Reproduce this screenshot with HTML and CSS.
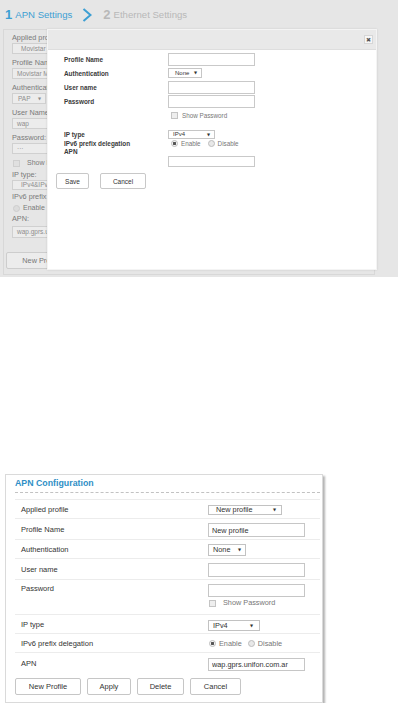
FILE: index.html
```html
<!DOCTYPE html>
<html lang="en">
<head>
  <meta charset="UTF-8" />
  <meta name="viewport" content="width=device-width, initial-scale=1.0"/>
  <title>APN Settings</title>
  <link rel="stylesheet" href="styles.css">
</head>
<body>

  <!-- wizard step with the "new profile" dialog open -->
  <div class="wizard-shot">
    <div class="steps">
      <span class="step-num">1</span><span class="step-name">APN Settings</span>
      <svg class="step-arrow" width="10" height="14" viewBox="0 0 10 14">
        <polyline points="1.5,1 8.5,7 1.5,13" />
      </svg>
      <span class="step-num off">2</span><span class="step-name off">Ethernet Settings</span>
    </div>

    <div class="old-panel">
      <div class="old-label first">Applied profile:</div>
      <div class="old-box select">Movistar Nacional</div>
      <div class="old-label">Profile Name:</div>
      <div class="old-box">Movistar MMS</div>
      <div class="old-label">Authentication:</div>
      <div class="old-box select small">PAP <span class="arrow">&#9660;</span></div>
      <div class="old-label">User Name:</div>
      <div class="old-box">wap</div>
      <div class="old-label">Password:</div>
      <div class="old-box">&middot;&middot;&middot;</div>
      <div class="old-check"><span class="check dim"></span>Show Password</div>
      <div class="old-label near">IP type:</div>
      <div class="old-box select thin">IPv4&amp;IPv6</div>
      <div class="old-label near">IPv6 prefix delegation:</div>
      <div class="old-radio"><span class="radio dim"></span>Enable</div>
      <div class="old-label nearer">APN:</div>
      <div class="old-box tall">wap.gprs.unifon.com.ar</div>
      <button class="old-btn">New Profile</button>
    </div>

    <div class="modal">
      <div class="modal-head"><span class="modal-close">&#10006;</span></div>
      <form class="modal-body">
        <div class="mrow">
          <label>Profile Name</label>
          <input type="text" class="m-input">
        </div>
        <div class="mrow">
          <label>Authentication</label>
          <div class="m-select auth">None <span class="arrow">&#9660;</span></div>
        </div>
        <div class="mrow">
          <label>User name</label>
          <input type="text" class="m-input">
        </div>
        <div class="mrow">
          <label>Password</label>
          <input type="password" class="m-input">
        </div>
        <div class="mrow">
          <span></span>
          <div class="m-check"><span class="check"></span>Show Password</div>
        </div>
        <div class="mrow iptype">
          <label>IP type</label>
          <div class="m-select ip">IPv4 <span class="arrow">&#9660;</span></div>
        </div>
        <div class="mrow prefix">
          <label>IPv6 prefix delegation</label>
          <div class="m-radios">
            <span class="radio on"></span>Enable
            <span class="radio"></span>Disable
          </div>
        </div>
        <div class="mrow apn">
          <label>APN</label>
          <input type="text" class="m-input">
        </div>
        <div class="m-buttons">
          <button type="button" class="m-btn save">Save</button>
          <button type="button" class="m-btn cancel">Cancel</button>
        </div>
      </form>
    </div>
  </div>

  <div class="spacer"></div>

  <!-- APN configuration card -->
  <div class="apn-card">
    <h3>APN Configuration</h3>

    <div class="apn-rows">
      <div class="apn-row">
        <label>Applied profile</label>
        <div class="c-select applied">New profile <span class="arrow">&#9660;</span></div>
      </div>
      <div class="apn-row tall">
        <label>Profile Name</label>
        <input type="text" class="c-input" value="New profile">
      </div>
      <div class="apn-row">
        <label>Authentication</label>
        <div class="c-select auth">None <span class="arrow">&#9660;</span></div>
      </div>
      <div class="apn-row tall">
        <label>User name</label>
        <input type="text" class="c-input">
      </div>
      <div class="apn-row password">
        <label>Password</label>
        <div class="c-stack">
          <input type="password" class="c-input">
          <div class="c-check"><span class="check"></span>Show Password</div>
        </div>
      </div>
      <div class="apn-row">
        <label>IP type</label>
        <div class="c-select ip">IPv4 <span class="arrow">&#9660;</span></div>
      </div>
      <div class="apn-row">
        <label>IPv6 prefix delegation</label>
        <div class="c-radios">
          <span class="radio on"></span>Enable
          <span class="radio"></span>Disable
        </div>
      </div>
      <div class="apn-row last">
        <label>APN</label>
        <input type="text" class="c-input" value="wap.gprs.unifon.com.ar">
      </div>
    </div>

    <div class="apn-buttons">
      <button class="c-btn new">New Profile</button>
      <button class="c-btn apply">Apply</button>
      <button class="c-btn delete">Delete</button>
      <button class="c-btn cancel">Cancel</button>
    </div>
  </div>

</body>
</html>
```

FILE: styles.css
```css
body {
  margin: 0;
  padding: 0;
  font-family: 'Liberation Sans', Arial, sans-serif;
  background: #fff;
  color: #333;
}

button,
input {
  font-family: inherit;
  margin: 0;
}

.arrow {
  font-family: 'DejaVu Sans', sans-serif;
  font-size: 4px;
}

/* ---------- top screenshot ---------- */

.wizard-shot {
  position: relative;
  height: 277px;
  background: #e6e6e6;
  overflow: hidden;
}

.steps {
  display: flex;
  align-items: center;
  height: 29px;
  padding-left: 5px;
  box-sizing: border-box;
}

.step-num {
  font-size: 13px;
  font-weight: bold;
  color: #3d9fd3;
  margin-right: 3px;
}

.step-name {
  font-size: 9.6px;
  color: #3d9fd3;
}

.steps .off {
  color: #b8b8b8;
}

.step-arrow {
  margin: 0 11px 0 10px;
}

.step-arrow polyline {
  fill: none;
  stroke: #3d9fd3;
  stroke-width: 2;
}

.old-panel {
  margin-left: 3px;
  width: 372px;
  height: 246px;
  box-sizing: border-box;
  border: 1px solid #d8d8d8;
  padding: 3px 0 0 8px;
  display: flex;
  flex-direction: column;
  align-items: flex-start;
  color: #7a7a7a;
}

.old-label {
  font-size: 7.3px;
  line-height: 10px;
  margin-top: 4px;
}

.old-label.first {
  margin-top: 0;
}

.old-label.near {
  margin-top: 2px;
}

.old-label.nearer {
  margin-top: 1px;
}

.old-box {
  width: 80px;
  height: 11px;
  box-sizing: border-box;
  border: 1px solid #d0d0d0;
  background: #ececec;
  font-size: 6.5px;
  line-height: 9px;
  color: #8c8c8c;
  padding-left: 4px;
}

.old-box.select {
  padding-left: 8px;
}

.old-box.small {
  width: 34px;
  padding-left: 5px;
  display: flex;
  justify-content: space-between;
  padding-right: 4px;
}

.old-box.thin {
  height: 10px;
  line-height: 8px;
}

.old-box.tall {
  height: 12px;
  line-height: 10px;
  margin-top: 2px;
}

.old-check,
.old-radio {
  display: flex;
  align-items: center;
  font-size: 7px;
  line-height: 10px;
  margin-top: 4px;
  margin-left: 1px;
}

.old-radio {
  margin-top: 1px;
}

.old-check .check {
  margin-right: 7px;
}

.old-btn {
  margin: 14px 0 0 -6px;
  width: 70px;
  height: 17px;
  border: 1px solid #cdcdcd;
  border-radius: 2px;
  background: #ececec;
  font-size: 7.3px;
  color: #777;
}

.check {
  display: inline-block;
  width: 5px;
  height: 5px;
  border: 1px solid #c4c4c4;
  background: #eee;
  margin-right: 4px;
}

.check.dim {
  background: #e0e0e0;
  border-color: #cfcfcf;
}

.radio {
  display: inline-block;
  width: 5px;
  height: 5px;
  border: 1px solid #bdbdbd;
  border-radius: 50%;
  background: #e8e8e8;
  margin-right: 3px;
}

.radio.on {
  background: radial-gradient(circle, #555 0 1.4px, #f4f4f4 1.6px);
}

.radio.dim {
  background: #dcdcdc;
  border-color: #cdcdcd;
}

/* dialog over the step */

.modal {
  position: absolute;
  left: 47px;
  top: 29px;
  width: 330px;
  height: 241px;
  box-sizing: border-box;
  background: #fff;
  border: 1px solid #f4f4f4;
  box-shadow: 0 0 2px rgba(0,0,0,0.12);
}

.modal-head {
  height: 19px;
  background: #e9e9e9;
  border-bottom: 1px solid #dedede;
  display: flex;
  align-items: center;
  justify-content: flex-end;
  padding-right: 3px;
}

.modal-close {
  width: 9px;
  height: 9px;
  box-sizing: border-box;
  border: 1px solid #d6d6d6;
  background: #f6f6f6;
  font-family: 'DejaVu Sans', sans-serif;
  font-size: 6px;
  line-height: 7px;
  color: #555;
  display: flex;
  align-items: center;
  justify-content: center;
}

.modal-body {
  padding: 2px 0 0 16px;
}

.mrow {
  display: grid;
  grid-template-columns: 104px auto;
  align-items: center;
  height: 14px;
}

.mrow label {
  font-size: 6.4px;
  font-weight: bold;
  color: #3a3a3a;
}

.mrow.iptype {
  margin-top: 7px;
  height: 10px;
}

.mrow.prefix {
  height: 9px;
}

.mrow.apn {
  height: 20px;
  align-items: start;
}

.mrow.apn label {
  line-height: 7px;
}

.mrow.apn .m-input {
  margin-top: 8px;
  height: 11px;
}

.m-input {
  width: 87px;
  height: 13px;
  box-sizing: border-box;
  border: 1px solid #c9c9c9;
  padding: 0;
  background: #fff;
}

.m-select {
  height: 10px;
  box-sizing: border-box;
  border: 1px solid #c6c6c6;
  font-size: 6px;
  line-height: 8px;
  color: #333;
  display: flex;
  justify-content: space-between;
}

.m-select.auth {
  width: 34px;
  padding: 0 4px 0 6px;
}

.m-select.ip {
  width: 47px;
  padding: 0 4px 0 4px;
  height: 9px;
  line-height: 7px;
}

.m-check,
.m-radios {
  display: flex;
  align-items: center;
  font-size: 6.3px;
  color: #777;
  padding-left: 3px;
}

.m-check .check {
  margin-right: 4px;
}

.m-radios .radio:nth-of-type(2) {
  margin-left: 7px;
}

.m-buttons {
  display: flex;
  gap: 11px;
  margin: 5px 0 0 -8px;
}

.m-btn {
  height: 16px;
  border: 1px solid #c8c8c8;
  border-radius: 2px;
  background: #fff;
  font-size: 6.5px;
  color: #333;
  padding: 0;
}

.m-btn.save {
  width: 33px;
}

.m-btn.cancel {
  width: 46px;
}

.spacer {
  height: 197px;
}

/* ---------- APN configuration card ---------- */

.apn-card {
  margin-left: 5px;
  width: 318px;
  box-sizing: border-box;
  border: 1px solid #dadada;
  box-shadow: 2px 2px 2px rgba(0,0,0,0.3);
  padding: 0 2px 7px 9px;
}

.apn-card h3 {
  margin: 0;
  padding-top: 2px;
  padding-bottom: 3px;
  line-height: 12px;
  font-size: 8.8px;
  font-weight: bold;
  color: #2f8fc6;
  border-bottom: 1px dashed #c2c2c2;
}

.apn-rows {
  margin-top: 6px;
  border-top: 1px solid #ececec;
}

.apn-row {
  display: grid;
  grid-template-columns: 193px auto;
  align-items: center;
  height: 18px;
  border-bottom: 1px solid #ececec;
}

.apn-row.tall {
  height: 20px;
}

.apn-row.password {
  height: 34px;
  align-items: start;
}

.apn-row.last {
  height: 21px;
  border-bottom: none;
}

.apn-row label {
  font-size: 7.5px;
  line-height: 9px;
  padding-left: 6px;
  color: #333;
}

.apn-row.password label {
  padding-top: 4px;
}

.c-input {
  width: 97px;
  height: 14px;
  box-sizing: border-box;
  border: 1px solid #c6c6c6;
  padding: 0 0 0 3px;
  font-size: 7.3px;
  color: #333;
  margin-top: 2px;
}

.apn-row.last .c-input {
  height: 13px;
  margin-top: 1px;
}

.c-stack {
  padding-top: 4px;
}

.c-stack .c-input {
  height: 13px;
  margin-top: 0;
  display: block;
}

.c-check {
  display: flex;
  align-items: center;
  font-size: 7.3px;
  line-height: 10px;
  color: #777;
  margin-top: 1px;
  padding-left: 1px;
}

.c-check .check {
  margin-right: 7px;
}

.c-select {
  height: 11px;
  box-sizing: border-box;
  border: 1px solid #c2c2c2;
  font-size: 7.3px;
  line-height: 9px;
  color: #333;
  display: flex;
  justify-content: space-between;
  margin-top: 2px;
}

.c-select.applied {
  width: 74px;
  padding: 0 5px 0 7px;
  height: 10px;
  line-height: 8px;
}

.c-select.auth {
  width: 38px;
  height: 12px;
  line-height: 10px;
  padding: 0 4px 0 4px;
  margin-top: 1px;
}

.c-select.ip {
  width: 52px;
  padding: 0 6px 0 4px;
}

.c-radios {
  display: flex;
  align-items: center;
  font-size: 7.3px;
  color: #777;
  padding-left: 1px;
  margin-top: 1px;
}

.c-radios .radio {
  margin-right: 3px;
}

.c-radios .radio:nth-of-type(2) {
  margin-left: 6px;
}

.apn-buttons {
  display: flex;
  gap: 6px;
  margin-top: 4px;
}

.c-btn {
  height: 17px;
  border: 1px solid #c6c6c6;
  border-radius: 2px;
  background: #fff;
  font-size: 7.5px;
  color: #333;
  padding: 0;
}

.c-btn.new { width: 66px; }
.c-btn.apply { width: 44px; }
.c-btn.delete { width: 47px; }
.c-btn.cancel { width: 51px; }
```
